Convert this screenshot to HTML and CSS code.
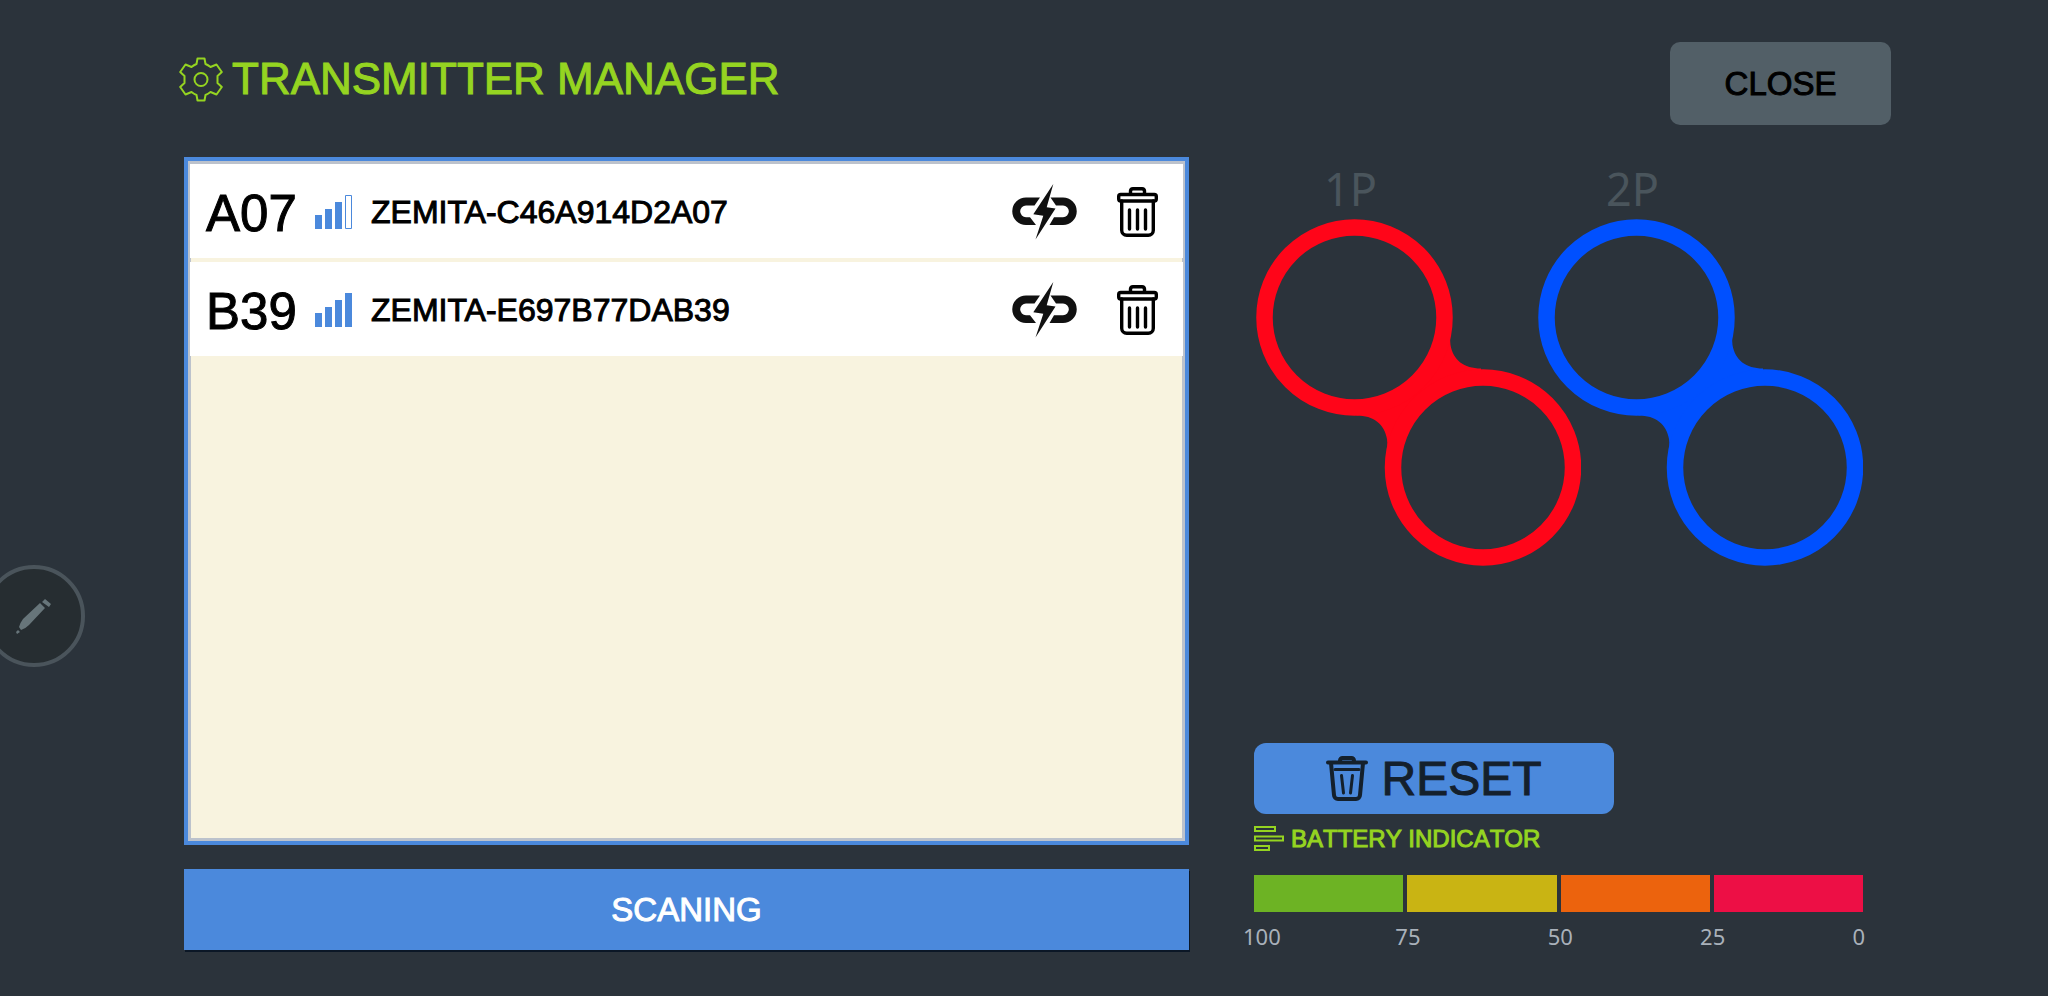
FILE: index.html
```html
<!DOCTYPE html>
<html lang="en">

<head>
  <meta charset="UTF-8">
  <meta name="viewport" content="width=device-width, initial-scale=1.0">
  <title>Transmitter Manager</title>
  <link rel="stylesheet" href="styles.css">
</head>

<body>
  <!-- shared icons -->
  <svg class="sprite" aria-hidden="true">
    <symbol id="unlink" viewBox="0 0 66 56">
      <path d="M28 13.5H14a13.7 13.7 0 0 0 0 27.5H24L18 33.2H14a5.8 5.8 0 0 1 0-11.7H22.5Z" />
      <path d="M38.5 13.5L44 21.5H51a5.8 5.8 0 0 1 0 11.7H42L37.5 41H51a13.7 13.7 0 0 0 0-27.5Z" />
      <path d="M41.3 0L21.3 30.3L31.3 31.7L23.5 55.5L43.5 24.6L34.7 23.3Z" />
    </symbol>
    <symbol id="trash" viewBox="0 0 41 50">
      <g fill="none" stroke="currentColor" stroke-width="3.4" stroke-linecap="round">
        <path d="M13.5 7V4a2.5 2.5 0 0 1 2.5-2.3H25a2.5 2.5 0 0 1 2.5 2.3V7" />
        <rect x="1.7" y="7.5" width="37.6" height="6.5" rx="2" />
        <path d="M4.7 14V43.3a5 5 0 0 0 5 5H31.3a5 5 0 0 0 5-5V14M12.5 23V42M20.5 23V42M28.5 23V42" />
      </g>
    </symbol>
    <symbol id="pod" viewBox="0 0 325 347">
      <path fill="currentColor" d="M195 110C194 116 194 121 194.5 126C197 141 208 149.5 225 149.5L227 248L130.5 236C131.5 230 131.5 225 131 220C128.5 205 117.5 196.5 100.5 196.5L98.5 98Z" />
      <g class="hole" stroke="currentColor" stroke-width="16.5">
        <circle cx="98.5" cy="98.5" r="90" />
        <circle cx="227" cy="248.5" r="90" />
      </g>
    </symbol>
  </svg>

  <header class="header">
    <h1 class="title">
      <svg class="gear" viewBox="0 0 44 45" aria-hidden="true">
        <path d="M18.5 1.5H25.5L26.5 7Q29 8 31.5 10L37.5 7.5L42.8 15L38.5 19V26L42.8 30L37.5 37.5L31.500 35Q29 37 26.5 38L25.500 43.5H18.5L17.5 38Q15 37 12.5 35L6.500 37.5L1.200 30L5.500 26V19L1.200 15L6.500 7.5L12.500 10Q15 8 17.500 7Z" />
        <circle cx="22" cy="22.5" r="6.5" />
      </svg>
      TRANSMITTER MANAGER
    </h1>
    <button type="button" class="close">CLOSE</button>
  </header>

  <main class="main">
    <section class="devices">
      <ul class="list">
        <li class="row">
          <span class="code">A07</span>
          <svg class="signal" viewBox="0 0 37 34" role="img" aria-label="3 of 4">
            <path d="M0 20h7v14H0zM10 14h7v20h-7zM20 7h7v27h-7z" />
            <path class="empty" d="M30.5 .5h6v33h-6z" />
          </svg>
          <span class="name">ZEMITA-C46A914D2A07</span>
          <button type="button" class="icon" aria-label="Disconnect A07"><svg class="unlink"><use href="#unlink" /></svg></button>
          <button type="button" class="icon" aria-label="Delete A07"><svg class="trash"><use href="#trash" /></svg></button>
        </li>
        <li class="row">
          <span class="code">B39</span>
          <svg class="signal" viewBox="0 0 37 34" role="img" aria-label="4 of 4">
            <path d="M0 20h7v14H0zM10 14h7v20h-7zM20 7h7v27h-7zM30 0h7v34h-7z" />
          </svg>
          <span class="name">ZEMITA-E697B77DAB39</span>
          <button type="button" class="icon" aria-label="Disconnect B39"><svg class="unlink"><use href="#unlink" /></svg></button>
          <button type="button" class="icon" aria-label="Delete B39"><svg class="trash"><use href="#trash" /></svg></button>
        </li>
      </ul>
      <button type="button" class="scan">SCANING</button>
    </section>

    <section class="side">
      <div class="players">
        <div class="player red">
          <h2>1P</h2>
          <svg viewBox="0 0 325 347" aria-hidden="true"><use href="#pod" /></svg>
        </div>
        <div class="player blue">
          <h2>2P</h2>
          <svg viewBox="0 0 325 347" aria-hidden="true"><use href="#pod" /></svg>
        </div>
      </div>

      <button type="button" class="reset">
        <svg class="bin" viewBox="0 0 42 45" aria-hidden="true">
          <path d="M2 6.5H40M14 6V4.5a2.5 2.5 0 0 1 2.5-2.5H25.5a2.5 2.5 0 0 1 2.5 2.5V6M5 7L8 39a4 4 0 0 0 4 4H30a4 4 0 0 0 4-4L37 7" />
          <path class="thin" d="M9 13.5H33M15.5 19.5L17.5 37M26.5 19.5L24.5 37" />
        </svg>
        RESET
      </button>

      <h3 class="battery">
        <svg viewBox="0 0 30 25" aria-hidden="true">
          <path d="M1 1h20v4H1zM1 10.5h28v4H1zM1 20h14v4H1z" />
        </svg>
        BATTERY INDICATOR
      </h3>
      <div class="bar">
        <span class="full"></span>
        <span class="good"></span>
        <span class="low"></span>
        <span class="critical"></span>
      </div>
      <div class="scale">
        <span>100</span>
        <span>75</span>
        <span>50</span>
        <span>25</span>
        <span>0</span>
      </div>
    </section>
  </main>

  <button type="button" class="edit" aria-label="Edit">
    <svg viewBox="0 0 36 36" aria-hidden="true">
      <path d="M5 32L3 29Q4 25 7 21L24 5L29 10L13 27Q9 31 5 32ZM26 4L29 1L35 6L33 9ZM0 34L2 32L4 34L1 36Z" />
    </svg>
  </button>
</body>

</html>
```

FILE: styles.css
```css
* {
  box-sizing: border-box;
}

body {
  margin: 0;
  min-height: 100vh;
  display: flex;
  flex-direction: column;
  background-color: #2b333b;
  font-family: "Liberation Sans", Arial, sans-serif;
  font-kerning: none;
  overflow-x: hidden;
}

h1,
h2,
h3,
ul {
  margin: 0;
  padding: 0;
  font-weight: normal;
}

button {
  border: none;
  padding: 0;
  font-family: inherit;
  font-kerning: inherit;
  cursor: pointer;
}

svg {
  display: block;
  flex: none;
}

.sprite {
  position: absolute;
  width: 0;
  height: 0;
}

/* header */
.header {
  display: flex;
  justify-content: space-between;
  align-items: flex-start;
  padding: 42px 157px 32px 179px;
}

.title {
  display: flex;
  align-items: center;
  gap: 9px;
  padding-top: 12px;
  font-size: 44px;
  line-height: 50px;
  color: #95d421;
  -webkit-text-stroke: 1px #95d421;
}

.gear {
  width: 44px;
  height: 45px;
  fill: none;
  stroke: #95d421;
  stroke-width: 2;
  stroke-linejoin: round;
}

.close {
  width: 221px;
  height: 83px;
  border-radius: 10px;
  background-color: #525f67;
  color: #000;
  font-size: 33px;
  -webkit-text-stroke: 1px #000;
}

/* two columns */
.main {
  flex: 1;
  display: grid;
  grid-template-columns: 1005fr 609fr;
  gap: 65px;
  padding: 0 185px 46px 184px;
}

.devices {
  display: flex;
  flex-direction: column;
  gap: 24px;
}

.list {
  flex: 1;
  list-style: none;
  border: 4px solid #4b89dc;
  background-color: #f8f3df;
  box-shadow: inset 0 0 0 3px #bcc2cc;
  padding: 3px 2px;
}

.row {
  display: flex;
  align-items: center;
  height: 94px;
  margin-bottom: 4px;
  padding: 2px 25px 0 16px;
  background-color: #fff;
  color: #000;
}

.code {
  width: 109px;
  padding-top: 2px;
  font-size: 51px;
  -webkit-text-stroke: 1px #000;
}

.signal {
  width: 37px;
  height: 34px;
  fill: #4b89dc;
}

.signal .empty {
  fill: #fff;
  stroke: #4b89dc;
}

.name {
  flex: 1;
  padding-left: 19px;
  font-size: 32px;
  font-kerning: normal;
  -webkit-text-stroke: 1px #000;
}

.icon {
  background: none;
  color: #000;
}

.unlink {
  width: 66px;
  height: 56px;
  margin-right: 39px;
  fill: #111;
}

.trash {
  width: 41px;
  height: 50px;
}

.scan {
  height: 81px;
  background-color: #4b89dc;
  box-shadow: 1px 2px 0 #0b1726;
  color: #fff;
  font-size: 33px;
  -webkit-text-stroke: 1px #fff;
}

/* right column */
.side {
  display: flex;
  flex-direction: column;
}

.players {
  display: flex;
  padding-left: 2px;
}

.player {
  width: 325px;
  flex: none;
}

.player h2 {
  padding: 2px 0 0 68px;
  font-family: "Noto Sans", sans-serif;
  font-size: 45px;
  line-height: 60px;
  color: #4a555c;
}

.red {
  color: #ff0519;
}

.blue {
  margin-left: -43px;
  color: #0050ff;
}

.hole {
  fill: #2b333b;
}

.reset {
  display: flex;
  align-items: center;
  justify-content: center;
  gap: 13px;
  width: 360px;
  height: 71px;
  margin-top: auto;
  border-radius: 12px;
  background-color: #4b89dc;
  color: #14202c;
  font-size: 48px;
  -webkit-text-stroke: 1px #14202c;
}

.bin {
  width: 42px;
  height: 45px;
  fill: none;
  stroke: #14202c;
  stroke-width: 4;
  stroke-linecap: round;
}

.bin .thin {
  stroke-width: 3;
}

.battery {
  display: flex;
  align-items: center;
  gap: 7px;
  margin: 10px 0 22px;
  font-size: 24px;
  line-height: 29px;
  color: #95d421;
  -webkit-text-stroke: 1px #95d421;
}

.battery svg {
  width: 30px;
  height: 25px;
  fill: none;
  stroke: #95d421;
  stroke-width: 2;
}

.bar {
  display: grid;
  grid-template-columns: repeat(4, 1fr);
  gap: 4px;
  height: 37px;
}

.full {
  background-color: #6db324;
}

.good {
  background-color: #c9b413;
}

.low {
  background-color: #ec630d;
}

.critical {
  background-color: #ed0f45;
}

.scale {
  display: grid;
  grid-template-columns: repeat(4, 1fr) auto;
  margin: 10px -2px 0 -11px;
  font-family: "Noto Sans", sans-serif;
  font-size: 22px;
  line-height: 28px;
  color: #a9b1ba;
}

/* floating button, half off the left edge */
.edit {
  position: fixed;
  left: -17px;
  top: 565px;
  width: 102px;
  height: 102px;
  display: flex;
  align-items: center;
  justify-content: center;
  border: 4px solid #4a545b;
  border-radius: 50%;
  background-color: #262d31;
}

.edit svg {
  width: 36px;
  height: 36px;
  fill: #67757a;
}
```
